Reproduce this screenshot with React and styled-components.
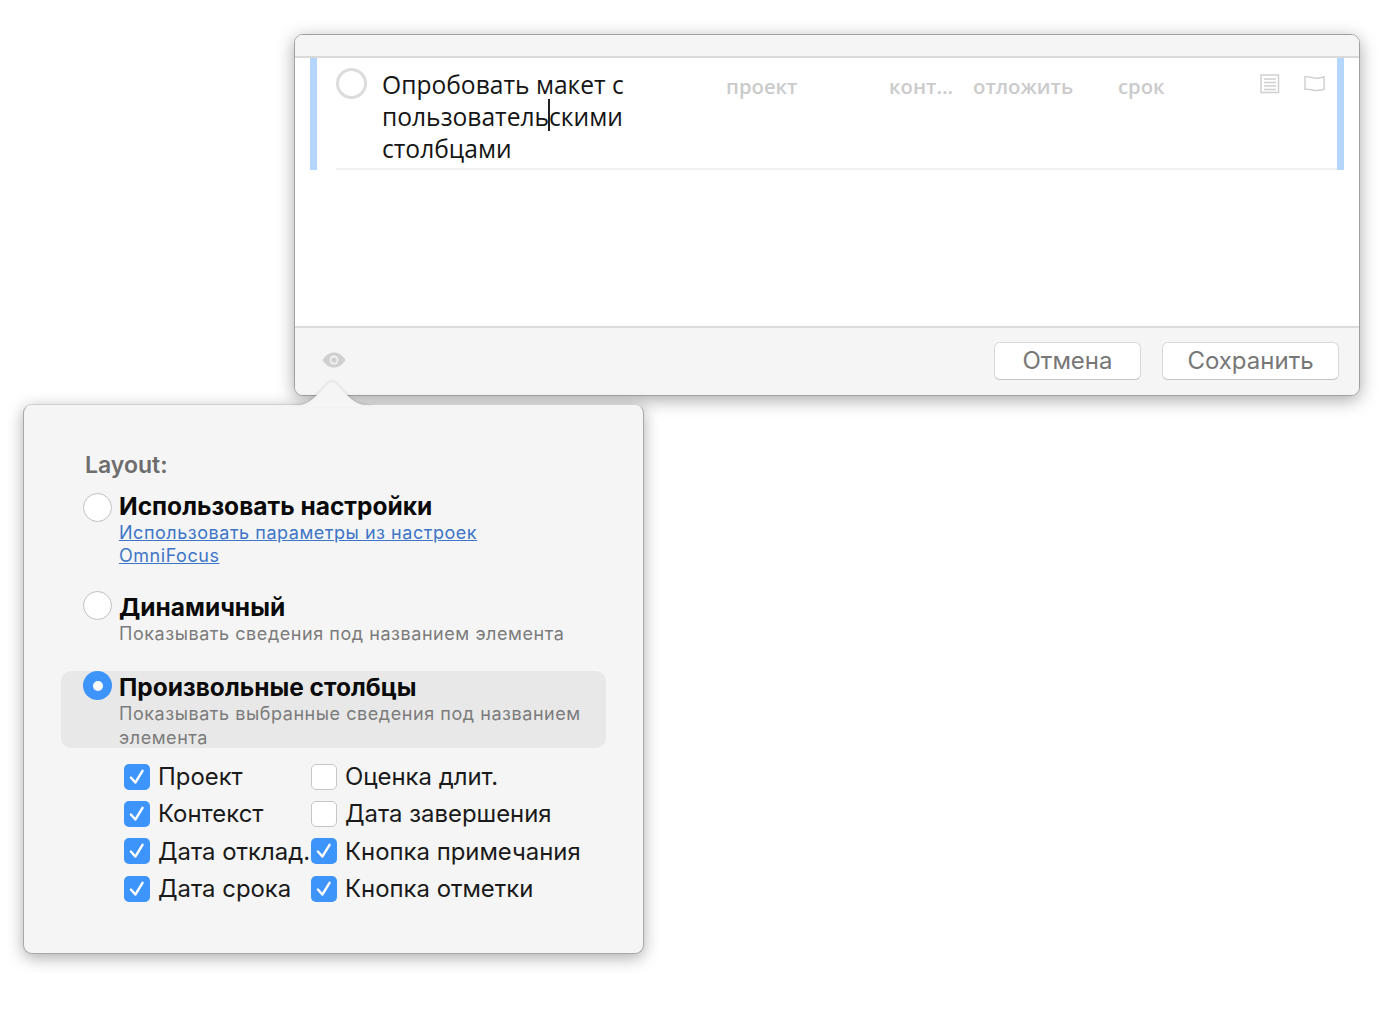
import styled, { createGlobalStyle } from 'styled-components'

const GlobalStyle = createGlobalStyle`
  html, body {
    margin: 0;
    background: #fff;
  }
  #root {
    position: relative;
    width: 1382px;
    height: 1012px;
    overflow: hidden;
    font-family: Inter, "Noto Sans", sans-serif;
  }
`

const EditorWindow = styled.div`
  position: absolute;
  left: 294px;
  top: 34px;
  width: 1066px;
  height: 362px;
  box-sizing: border-box;
  display: flex;
  flex-direction: column;
  background: #fff;
  border: 1px solid #a0a0a0;
  border-radius: 9px;
  box-shadow: 0 4px 17px rgba(0, 0, 0, 0.34);
  overflow: hidden;
`
const TitleBar = styled.div`
  height: 21px;
  background: #f5f5f5;
  border-bottom: 2px solid #d9d9d9;
  flex: none;
`
const Body = styled.div`
  flex: 1;
  padding: 0 15px;
`
const TaskRow = styled.div`
  height: 112px;
  box-sizing: border-box;
  border-left: 7px solid #b3d5fe;
  border-right: 7px solid #b3d5fe;
`
const TaskInner = styled.div`
  height: 100%;
  box-sizing: border-box;
  margin-left: 19px;
  padding-top: 10px;
  display: flex;
  align-items: flex-start;
  border-bottom: 2px solid #f1f1f1;
`
const TaskCircle = styled.div`
  flex: none;
  width: 31px;
  height: 31px;
  box-sizing: border-box;
  border: 3px solid #dcdcdc;
  border-radius: 50%;
  margin-right: 15px;
`
const TaskTitle = styled.div`
  flex: none;
  width: 344px;
  margin-top: 1px;
  font-family: "Open Sans", sans-serif;
  font-size: 24.6px;
  line-height: 32px;
  color: #151515;
`
const TitleLine = styled.div`
  white-space: nowrap;
`
const Caret = styled.span`
  position: relative;
  &::after {
    content: '';
    position: absolute;
    left: -1px;
    top: -1px;
    width: 2px;
    height: 32px;
    background: #222;
  }
`
const Field = styled.div`
  flex: none;
  width: ${(p) => p.$width}px;
  margin-top: 4px;
  font-family: "Open Sans", sans-serif;
  font-size: 20.3px;
  font-weight: 600;
  line-height: 28px;
  color: #cbcbcb;
`
const RowIcon = styled.svg`
  flex: none;
  margin-top: ${(p) => p.$top}px;
  margin-right: ${(p) => p.$right}px;
`
const Footer = styled.div`
  flex: none;
  height: 69px;
  box-sizing: border-box;
  display: flex;
  align-items: center;
  gap: 21px;
  padding: 0 20px 2px 27px;
  background: #f5f5f5;
  border-top: 2px solid #dcdcdc;
`
const EyeIcon = styled.svg`
  margin-right: auto;
  margin-bottom: 2px;
`
const Button = styled.button`
  height: 38px;
  width: ${(p) => p.$width}px;
  padding: 0;
  background: #fff;
  border: 1px solid #d8d8d8;
  border-bottom-color: #c4c4c4;
  border-radius: 6px;
  font-family: Inter, sans-serif;
  font-size: 24px;
  color: #777;
`

const Popover = styled.div`
  position: absolute;
  left: 23px;
  top: 404px;
  width: 621px;
  height: 550px;
  box-sizing: border-box;
  padding: 44px 37px 0;
  background: #f5f5f5;
  border: 1px solid #a8a8a8;
  border-top-color: #d0d0d0;
  border-radius: 9px;
  box-shadow: 0 4px 16px rgba(0, 0, 0, 0.32);
`
const Arrow = styled.svg`
  position: absolute;
  left: 269px;
  top: -25px;
  filter: drop-shadow(0 -1px 1px rgba(0, 0, 0, 0.12));
`
const Heading = styled.div`
  margin-left: 24px;
  font-size: 23px;
  font-weight: 600;
  line-height: 32px;
  color: #6d6d6d;
`
const Option = styled.div`
  display: flex;
  gap: 7px;
  height: ${(p) => p.$height}px;
  margin-top: ${(p) => p.$top}px;
  padding-left: 22px;
  border-radius: 10px;
  background: ${(p) => (p.$selected ? '#e8e8e8' : 'transparent')};
`
const Radio = styled.div`
  flex: none;
  width: 29px;
  height: 29px;
  margin-top: ${(p) => p.$top}px;
  box-sizing: border-box;
  border-radius: 50%;
  display: flex;
  align-items: center;
  justify-content: center;
  background: ${(p) => (p.$on ? '#3d94fb' : '#fff')};
  border: ${(p) => (p.$on ? 'none' : '1.5px solid #c0c0c0')};
  &::after {
    content: '';
    display: ${(p) => (p.$on ? 'block' : 'none')};
    width: 10px;
    height: 10px;
    border-radius: 50%;
    background: #fff;
  }
`
const OptionText = styled.div`
  min-width: 0;
  margin-top: ${(p) => p.$top || 0}px;
`
const OptionTitle = styled.div`
  padding-top: 2px;
  font-size: 24.5px;
  font-weight: 700;
  line-height: 30px;
  color: #0a0a0a;
`
const OptionNote = styled.div`
  font-size: 18px;
  line-height: 23.5px;
  letter-spacing: 0.55px;
  color: #7b7b7b;
`
const OptionLink = styled.a`
  display: block;
  font-size: 18px;
  line-height: 23px;
  letter-spacing: 0.53px;
  color: #3d76c7;
  text-decoration: underline;
`
const CheckGrid = styled.div`
  display: grid;
  grid-template-columns: 187px 1fr;
  grid-auto-rows: 37.3px;
  margin: 10px 0 0 63px;
`
const CheckRow = styled.div`
  display: flex;
  align-items: center;
  gap: 8px;
  font-size: 23.9px;
  color: #1a1a1a;
  white-space: nowrap;
`
const CheckBox = styled.div`
  flex: none;
  width: 26px;
  height: 26px;
  box-sizing: border-box;
  border-radius: 5px;
  display: flex;
  align-items: center;
  justify-content: center;
  background: ${(p) => (p.$on ? '#3d94fb' : '#fff')};
  border: ${(p) => (p.$on ? 'none' : '1.5px solid #c6c6c6')};
`

const checks = [
  ['Проект', true],
  ['Оценка длит.', false],
  ['Контекст', true],
  ['Дата завершения', false],
  ['Дата отклад.', true],
  ['Кнопка примечания', true],
  ['Дата срока', true],
  ['Кнопка отметки', true],
]

const App = () => {
  return (
    <>
      <GlobalStyle />
      <EditorWindow>
        <TitleBar />
        <Body>
          <TaskRow>
            <TaskInner>
              <TaskCircle />
              <TaskTitle>
                <TitleLine>Опробовать макет с</TitleLine>
                <TitleLine>пользователь<Caret />скими</TitleLine>
                <TitleLine>столбцами</TitleLine>
              </TaskTitle>
              <Field $width={163}>проект</Field>
              <Field $width={84}>конт...</Field>
              <Field $width={145}>отложить</Field>
              <Field $width={142}>срок</Field>
              <RowIcon $top={6} $right={24} width="20" height="20" viewBox="0 0 20 20" fill="none" stroke="#cfcfcf" strokeWidth="1.5">
                <rect x="1" y="1" width="17.5" height="17.5" />
                <path d="M4 5h12M4 8.5h12M4 12h12M4 15.5h12" />
              </RowIcon>
              <RowIcon $top={7} $right={0} width="21" height="17" viewBox="0 0 22 17" fill="none" stroke="#cfcfcf" strokeWidth="1.5">
                <path d="M1 1.5c4-1 7 1.200 10.500 1.400 3.500.2 6-.5 9.500-1.400v13c-3.500 1-6 1.600-9.500 1.300C8 15.500 5 13.800 1 14.500z" />
              </RowIcon>
            </TaskInner>
          </TaskRow>
        </Body>
        <Footer>
          <EyeIcon width="24" height="16" viewBox="0 0 24 16">
            <path d="M0.500 8C3.500 3 7.500 0.500 12 0.500S20.500 3 23.500 8C20.500 13 16.500 15.500 12 15.500S3.500 13 0.500 8z" fill="#d0d0d0" />
            <circle cx="12" cy="8" r="4.500" fill="#f0f0f0" />
            <circle cx="12" cy="8" r="2.600" fill="#d0d0d0" />
          </EyeIcon>
          <Button $width={147}>Отмена</Button>
          <Button $width={177}>Сохранить</Button>
        </Footer>
      </EditorWindow>

      <Popover>
        <Arrow width="80" height="27" viewBox="0 0 80 27">
          <path d="M0 26C14 26 20 19 26 13L35 3.500C37.500 1 40.500 1 43 3.500L52 13C58 19 64 26 80 26V27H0z" fill="#f5f5f5" />
        </Arrow>
        <Heading>Layout:</Heading>
        <Option $height={85} $top={8}>
          <Radio $top={4} />
          <OptionText>
            <OptionTitle>Использовать настройки</OptionTitle>
            <OptionLink>Использовать параметры из настроек<br />OmniFocus</OptionLink>
          </OptionText>
        </Option>
        <Option $height={65} $top={16}>
          <Radio $top={1} />
          <OptionText>
            <OptionTitle>Динамичный</OptionTitle>
            <OptionNote>Показывать сведения под названием элемента</OptionNote>
          </OptionText>
        </Option>
        <Option $selected $height={77} $top={16}>
          <Radio $on $top={0} />
          <OptionText $top={-1}>
            <OptionTitle>Произвольные столбцы</OptionTitle>
            <OptionNote>Показывать выбранные сведения под названием элемента</OptionNote>
          </OptionText>
        </Option>
        <CheckGrid>
          {checks.map(([label, on]) => (
            <CheckRow key={label}>
              <CheckBox $on={on}>
                {on && (
                  <svg width="20" height="20" viewBox="0 0 18 18" fill="none" stroke="#fff" strokeWidth="2.200" strokeLinecap="round" strokeLinejoin="round">
                    <path d="M3.500 9.500L7.500 14L14 3.500" />
                  </svg>
                )}
              </CheckBox>
              {label}
            </CheckRow>
          ))}
        </CheckGrid>
      </Popover>
    </>
  )
}

export default App
